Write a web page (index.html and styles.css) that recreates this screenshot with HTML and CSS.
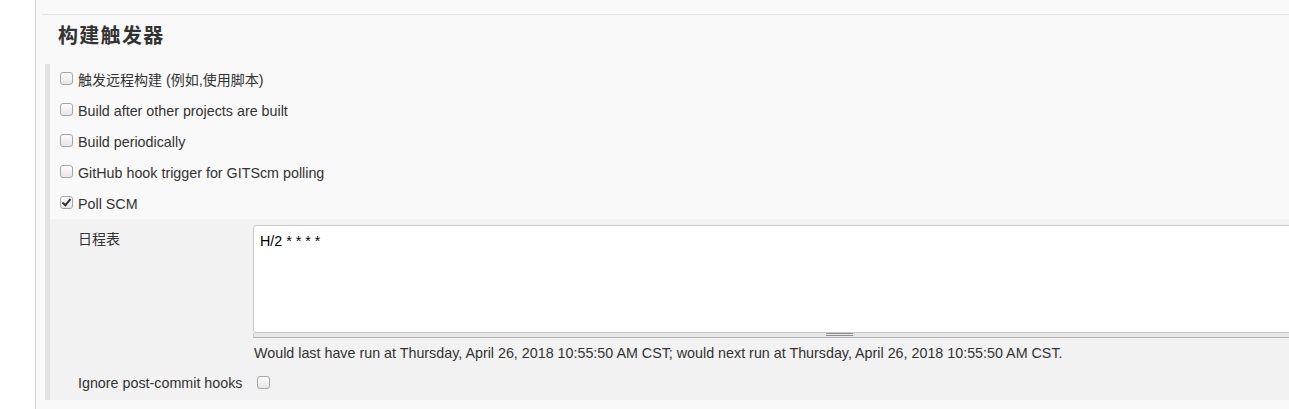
FILE: index.html
```html
<!DOCTYPE html>
<html lang="zh">
<head>
<meta charset="utf-8">
<title>构建触发器</title>
<link rel="stylesheet" href="styles.css">
</head>
<body>
<div class="page">
  <div class="section">
    <h2 class="section-title">构建触发器</h2>
    <div class="group">
      <label class="opt"><span class="cb"></span><span class="txt"><span class="cjk">触发远程构建</span> (<span class="cjk">例如</span>,<span class="cjk">使用脚本</span>)</span></label>
      <label class="opt"><span class="cb"></span><span class="txt">Build after other projects are built</span></label>
      <label class="opt"><span class="cb"></span><span class="txt">Build periodically</span></label>
      <label class="opt"><span class="cb"></span><span class="txt">GitHub hook trigger for GITScm polling</span></label>
      <label class="opt"><span class="cb checked"></span><span class="txt">Poll SCM</span></label>
      <div class="sub">
        <div class="field">
          <div class="field-label cjk">日程表</div>
          <div class="field-control">
            <div class="textarea">H/2 * * * *</div>
            <div class="grip"><span class="grip-lines"></span></div>
            <div class="desc">Would last have run at Thursday, April 26, 2018 10:55:50 AM CST; would next run at Thursday, April 26, 2018 10:55:50 AM CST.</div>
          </div>
        </div>
        <div class="field inline">
          <div class="ignore-label">Ignore post-commit hooks</div>
          <span class="cb"></span>
        </div>
      </div>
    </div>
  </div>
</div>
</body>
</html>
```

FILE: styles.css
```css
html, body {
  margin: 0;
  padding: 0;
  background: #ffffff;
  overflow: hidden;
  height: 409px;
}
body {
  font-family: "Liberation Sans", Arial, "Noto Sans CJK SC", sans-serif;
  font-size: 14.3px;
  color: #333333;
}
.page {
  margin-left: 35px;
  border-left: 1px solid #d3d3d3;
  background: #f9f9f9;
  height: 409px;
  padding-top: 14px;
  box-sizing: border-box;
}
.section {
  margin-left: 6px;
  border-top: 1px solid #e3e3e3;
}
.section-title {
  margin: 0;
  padding: 8px 0 0 16px;
  height: 41px;
  line-height: 24px;
  font-family: "Noto Sans CJK SC", serif;
  font-size: 20px;
  font-weight: 700;
  letter-spacing: 1.3px;
  color: #333333;
}
.group {
  margin-left: 3px;
  border-left: 5px solid #e2e2e2;
}
.opt {
  display: flex;
  align-items: center;
  height: 31px;
  padding-left: 10px;
  gap: 5px;
}
.cjk {
  font-family: "Noto Sans CJK SC", sans-serif;
  font-size: 14px;
}
.txt {
  line-height: 16px;
}
.cb {
  display: inline-block;
  width: 11px;
  height: 11px;
  border: 1px solid #a6a6a6;
  border-radius: 3px;
  background: linear-gradient(#fdfdfd, #e6e6e6);
  position: relative;
  top: -1px;
  flex: none;
}
.cb.checked::after {
  content: "";
  position: absolute;
  left: 3px;
  top: 0px;
  width: 3px;
  height: 7px;
  border-right: 2px solid #333;
  border-bottom: 2px solid #333;
  transform: rotate(40deg);
}
.sub {
  background: #f2f2f2;
  padding: 6px 0 0 28px;
  height: 181px;
  box-sizing: border-box;
}
.field {
  display: flex;
}
.field-label {
  width: 175px;
  flex: none;
  padding-top: 6px;
  line-height: 14px;
}
.field-control {
  flex: none;
  width: 1100px;
}
.textarea {
  background: #ffffff;
  border: 1px solid #c8c8c8;
  border-radius: 3px 0 0 3px;
  padding: 7px 6px;
  box-sizing: border-box;
  height: 108px;
  color: #000;
  line-height: 16px;
}
.grip {
  height: 4px;
  background: #e6e6e6;
  border-left: 1px solid #c8c8c8;
  border-bottom: 1px solid #b4b4b4;
  padding-left: 572px;
}
.grip-lines {
  display: block;
  width: 27px;
  height: 1px;
  margin-top: 0;
  border-top: 1px solid #8e8e8e;
  border-bottom: 1px solid #8e8e8e;
}
.desc {
  padding: 7px 0 0 1px;
  line-height: 16px;
  height: 27px;
}
.inline {
  align-items: center;
  height: 22px;
  gap: 15px;
}
.ignore-label {
  line-height: 16px;
}
```
